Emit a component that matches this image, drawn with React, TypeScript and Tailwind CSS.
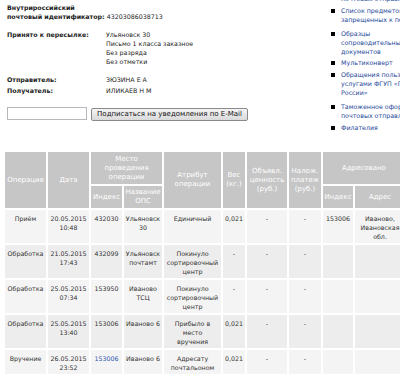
import React from "react";

type Row = {
  op: string;
  date: string[];
  idx: string;
  idxLink?: boolean;
  name: string[];
  attr: string[];
  w: string;
  v: string;
  n: string;
  aidx?: string;
  addr?: string[];
};

const rows: Row[] = [
  { op: "Приём", date: ["20.05.2015", "10:48"], idx: "432030", name: ["Ульяновск", "30"], attr: ["Единичный"], w: "0,021", v: "-", n: "-", aidx: "153006", addr: ["Иваново,", "Ивановская", "обл."] },
  { op: "Обработка", date: ["21.05.2015", "17:43"], idx: "432099", name: ["Ульяновск", "почтамт"], attr: ["Покинуло", "сортировочный", "центр"], w: "-", v: "-", n: "-" },
  { op: "Обработка", date: ["25.05.2015", "07:34"], idx: "153950", name: ["Иваново", "ТСЦ"], attr: ["Покинуло", "сортировочный", "центр"], w: "-", v: "-", n: "-" },
  { op: "Обработка", date: ["25.05.2015", "13:40"], idx: "153006", name: ["Иваново 6"], attr: ["Прибыло в", "место", "вручения"], w: "0,021", v: "-", n: "-" },
  { op: "Вручение", date: ["26.05.2015", "23:52"], idx: "153006", idxLink: true, name: ["Иваново 6"], attr: ["Адресату", "почтальоном"], w: "0,021", v: "-", n: "-" },
];

function Lines({ items }: { items: string[] }) {
  return (
    <>
      {items.map((t, i) => (
        <div key={i}>{t}</div>
      ))}
    </>
  );
}

function SideItem({ lines, className }: { lines: string[]; className?: string }) {
  return (
    <div className={"flex items-start " + (className ?? "")}>
      <span className="mt-[3px] w-[4px] h-[4px] bg-black shrink-0" />
      <div className="ml-[6px] text-[#23479a] whitespace-nowrap">
        <Lines items={lines} />
      </div>
    </div>
  );
}

export default function App() {
  const th = "bg-[#c6c6c6] text-white font-normal text-center align-middle text-[7px] leading-[9px] p-0";
  return (
    <div
      className="w-[400px] h-[379px] overflow-hidden bg-white text-[6.3px] leading-[9px] text-[#222]"
      style={{ fontFamily: '"DejaVu Sans", Verdana, sans-serif' }}
    >
      <div className="flex h-[150px]">
        <div className="w-[331px] shrink-0 pl-[7px] pt-[3px]">
          <div className="font-bold">Внутрироссийский</div>
          <div className="whitespace-nowrap">
            <span className="font-bold">почтовый идентификатор:</span> 43203086038713
          </div>
          <div className="mt-[9px] flex">
            <div className="w-[99px] font-bold">Принято к пересылке:</div>
            <div>
              <Lines items={["Ульяновск 30", "Письмо 1 класса заказное", "Без разряда", "Без отметки"]} />
            </div>
          </div>
          <div className="mt-[9px] flex">
            <div className="w-[99px] font-bold">Отправитель:</div>
            <div>ЗЮЗИНА Е А</div>
          </div>
          <div className="mt-[2px] flex">
            <div className="w-[99px] font-bold">Получатель:</div>
            <div>ИЛИКАЕВ Н М</div>
          </div>
          <div className="mt-[12px] flex items-start">
            <input
              className="w-[80px] h-[13px] border border-[#b5b9bd] bg-white outline-none"
              type="text"
            />
            <button className="ml-[4px] mt-[1px] w-[157px] h-[13px] border border-[#8a8a8a] rounded-[2px] bg-gradient-to-b from-[#f4f4f4] to-[#dadada] text-[7px] leading-[11px] text-[#111] whitespace-nowrap p-0">
              Подписаться на уведомления по E-Mail
            </button>
          </div>
        </div>
        <div className="-mt-[15px] flex flex-col">
          <SideItem lines={["Сроки пересылки", "почтовых отправлений"]} />
          <SideItem className="mt-[3px]" lines={["Список предметов,", "запрещенных к пересылке"]} />
          <SideItem className="mt-[5px]" lines={["Образцы", "сопроводительных", "документов"]} />
          <SideItem className="mt-[2px]" lines={["Мультиконверт"]} />
          <SideItem className="mt-[3px]" lines={["Обращения пользователей", "услугами ФГУП «Почта", "России»"]} />
          <SideItem className="mt-[5px]" lines={["Таможенное оформление", "почтовых отправлений"]} />
          <SideItem className="mt-[3px]" lines={["Филателия"]} />
        </div>
      </div>

      <div className="pl-[3px]">
        <table className="table-fixed border-separate border-spacing-[2px] w-[404px] text-[#333]">
          <colgroup>
            <col className="w-[41px]" />
            <col className="w-[41px]" />
            <col className="w-[31px]" />
            <col className="w-[38px]" />
            <col className="w-[57px]" />
            <col className="w-[22px]" />
            <col className="w-[40px]" />
            <col className="w-[32px]" />
            <col className="w-[30px]" />
            <col className="w-[50px]" />
          </colgroup>
          <thead>
            <tr>
              <th rowSpan={2} className={th}>Операция</th>
              <th rowSpan={2} className={th}>Дата</th>
              <th colSpan={2} className={th + " h-[32px]"}>
                <Lines items={["Место", "проведения", "операции"]} />
              </th>
              <th rowSpan={2} className={th}>
                <Lines items={["Атрибут", "операции"]} />
              </th>
              <th rowSpan={2} className={th}>
                <Lines items={["Вес", "(кг.)"]} />
              </th>
              <th rowSpan={2} className={th}>
                <Lines items={["Объявл.", "ценность", "(руб.)"]} />
              </th>
              <th rowSpan={2} className={th}>
                <Lines items={["Налож.", "платеж", "(руб.)"]} />
              </th>
              <th colSpan={2} className={th}>Адресовано</th>
            </tr>
            <tr>
              <th className={th + " h-[22px]"}>Индекс</th>
              <th className={th}>
                <Lines items={["Название", "ОПС"]} />
              </th>
              <th className={th}>Индекс</th>
              <th className={th}>Адрес</th>
            </tr>
          </thead>
          <tbody>
            {rows.map((r, i) => {
              const bg = i % 2 === 0 ? "bg-[#f4f4f4]" : "bg-[#ededed]";
              const td = bg + " text-center align-top pt-[4px] pb-[2px] px-0 whitespace-nowrap";
              return (
                <tr key={i}>
                  <td className={td}>{r.op}</td>
                  <td className={td}><Lines items={r.date} /></td>
                  <td className={td}>
                    {r.idxLink ? <span className="text-[#2a56b0]">{r.idx}</span> : r.idx}
                  </td>
                  <td className={td}><Lines items={r.name} /></td>
                  <td className={td}><Lines items={r.attr} /></td>
                  <td className={td}>{r.w}</td>
                  <td className={td}>{r.v}</td>
                  <td className={td}>{r.n}</td>
                  <td className={td}>{r.aidx ?? ""}</td>
                  <td className={td}>{r.addr ? <Lines items={r.addr} /> : null}</td>
                </tr>
              );
            })}
          </tbody>
        </table>
      </div>
    </div>
  );
}
